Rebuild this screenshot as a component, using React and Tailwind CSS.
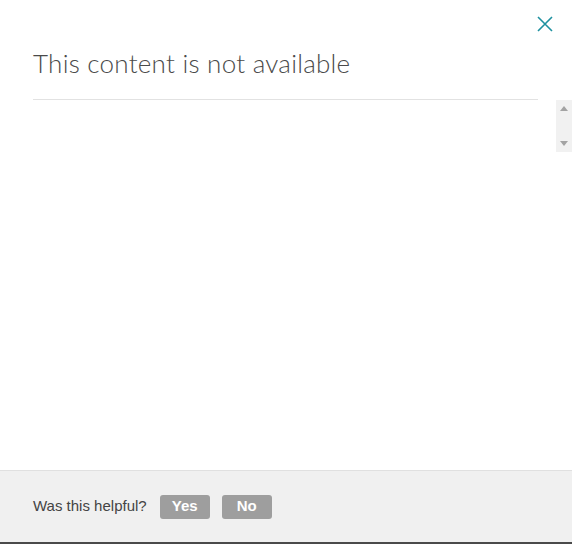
import React from "react";

const CloseIcon = () => (
  <svg width="16" height="16" viewBox="0 0 16 16" fill="none">
    <path d="M1 1L15 15M15 1L1 15" stroke="#1e91a0" strokeWidth="1.6" />
  </svg>
);

const ScrollStub = () => (
  <div className="w-4 h-[52px] bg-[#f1f1f1] flex flex-col items-center justify-between py-[6px]">
    <svg width="8" height="5" viewBox="0 0 8 5">
      <path d="M0 5L4 0L8 5Z" fill="#a3a3a3" />
    </svg>
    <svg width="8" height="5" viewBox="0 0 8 5">
      <path d="M0 0L8 0L4 5Z" fill="#a3a3a3" />
    </svg>
  </div>
);

const App = () => {
  return (
    <div className="w-[572px] h-[544px] flex flex-col bg-white font-['Liberation_Sans',Arial,sans-serif]">
      <div className="relative flex-1">
        <button className="absolute right-[19px] top-[16px] p-0 leading-none">
          <CloseIcon />
        </button>
        <h1 className="pt-[47px] px-[33px] text-[26px] leading-[32px] font-light text-[#4a4a4a] font-['Lato','Noto_Sans',sans-serif] tracking-[0.25px]">
          This content is not available
        </h1>
        <div className="mt-[20px] ml-[33px] mr-[34px] h-px bg-[#e2e2e2]" />
        <div className="flex justify-end">
          <ScrollStub />
        </div>
      </div>

      <div className="h-[74px] bg-[#f0f0f0] border-t border-[#e0e0e0] border-b-2 border-b-[#4a4a4a] flex items-center px-[33px]">
        <span className="text-[15px] text-[#444]">Was this helpful?</span>
        <button className="ml-[13px] w-[50px] h-[24px] rounded-[3px] bg-[#9e9e9e] text-white text-[15px] font-bold">
          Yes
        </button>
        <button className="ml-[12px] w-[50px] h-[24px] rounded-[3px] bg-[#9e9e9e] text-white text-[15px] font-bold">
          No
        </button>
      </div>
    </div>
  );
};

export default App;
